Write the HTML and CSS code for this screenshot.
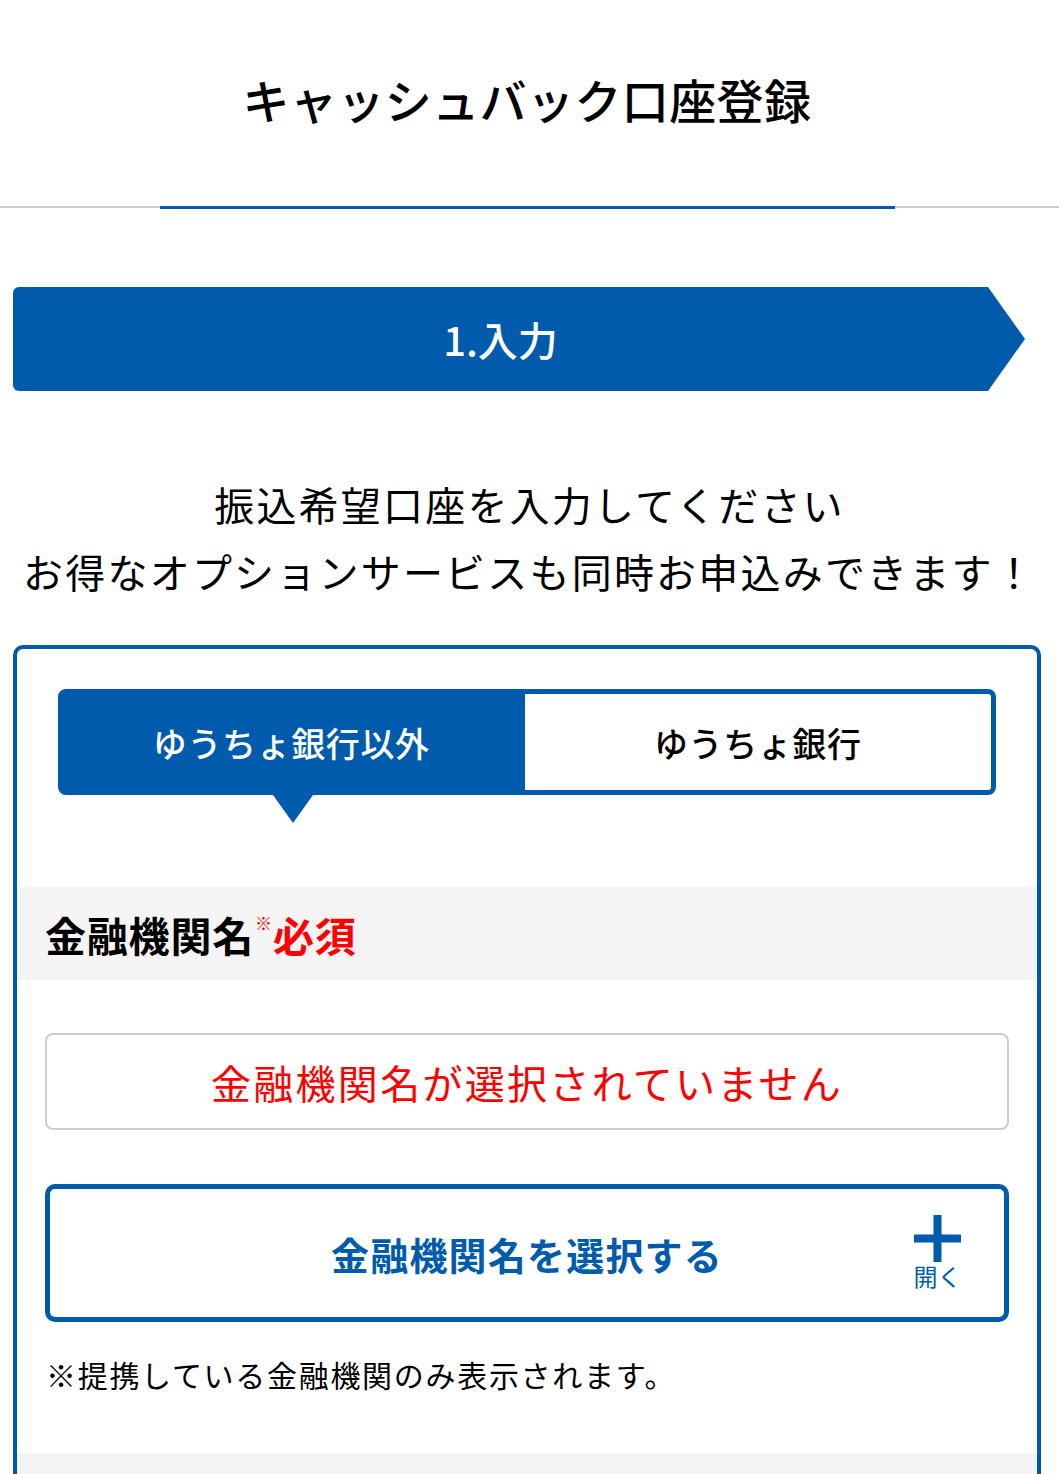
FILE: index.html
```html
<!DOCTYPE html>
<html lang="ja">
<head>
<meta charset="utf-8">
<title>キャッシュバック口座登録</title>
<link rel="stylesheet" href="styles.css">
</head>
<body>
<header class="page-header">
  <h1 class="page-title">キャッシュバック口座登録</h1>
</header>
<div class="rule">
  <span class="rule-gray"></span><span class="rule-active"></span><span class="rule-gray"></span>
</div>
<div class="step">
  <div class="step-body">1.入力</div>
  <svg class="step-arrow" viewBox="0 0 37 104" width="37" height="104" aria-hidden="true"><polygon points="0,0 37,52 0,104" fill="#005bac"/></svg>
</div>
<p class="intro">振込希望口座を入力してください<br>お得なオプションサービスも同時お申込みできます！</p>
<section class="card">
  <div class="tabs">
    <div class="tab tab-active">ゆうちょ銀行以外<span class="tab-pointer"></span></div>
    <div class="tab tab-idle">ゆうちょ銀行</div>
  </div>
  <div class="field-head">
    <span class="field-label">金融機関名</span><span class="req-mark">※</span><span class="req">必須</span>
  </div>
  <div class="field-value">金融機関名が選択されていません</div>
  <button class="select-btn" type="button">
    <span class="select-text">金融機関名を選択する</span>
    <span class="open-toggle">
      <svg class="plus" viewBox="0 0 47 47" width="47" height="47" aria-hidden="true"><rect x="19.5" y="0" width="8" height="47" fill="#005bac"/><rect x="0" y="19.5" width="47" height="8" fill="#005bac"/></svg>
      <span class="open-label">開く</span>
    </span>
  </button>
  <p class="note">※提携している金融機関のみ表示されます。</p>
  <div class="field-head field-next"></div>
</section>
</body>
</html>
```
FILE: styles.css
```css
html, body {
  margin: 0;
  padding: 0;
  background: #fff;
}
body {
  font-family: "Noto Sans CJK JP", "Noto Sans", sans-serif;
  color: #000;
  width: 1059px;
  overflow: hidden;
}
.page-header {
  height: 206px;
  display: flex;
  align-items: center;
  justify-content: center;
  padding-bottom: 10px;
  padding-right: 5px;
  box-sizing: border-box;
}
.page-title {
  margin: 0;
  font-size: 47px;
  line-height: 1;
  font-weight: 500;
  letter-spacing: 0.4px;
}
.rule {
  display: flex;
  height: 3px;
}
.rule-gray {
  flex: 1;
  height: 2px;
  background: #cccccc;
}
.rule-active {
  width: 735px;
  height: 3px;
  background: #005bac;
}
.rule .rule-gray:first-child {
  flex: 0 0 160px;
}
.step {
  display: flex;
  margin: 78px 34px 0 13px;
  height: 104px;
}
.step-body {
  flex: 1;
  background: #005bac;
  border-radius: 6px 0 0 6px;
  color: #fff;
  font-size: 40px;
  font-weight: 500;
  display: flex;
  align-items: center;
  justify-content: center;
}
.step-arrow {
  display: block;
  flex: 0 0 37px;
}
.intro {
  margin: 80px 0 0;
  text-align: center;
  font-size: 40px;
  line-height: 67px;
  letter-spacing: 2.2px;
  font-weight: 400;
}
.card {
  margin: 40px 18px 0 13px;
  border: 4px solid #005bac;
  border-bottom: none;
  border-radius: 10px 10px 0 0;
  padding-top: 40px;
}
.tabs {
  display: flex;
  margin: 0 41px;
  height: 106px;
}
.tab {
  flex: 1;
  display: flex;
  align-items: center;
  justify-content: center;
  font-size: 34px;
  font-weight: 500;
  letter-spacing: 0.6px;
  box-sizing: border-box;
}
.tab-active {
  position: relative;
  background: #005bac;
  color: #fff;
  border-radius: 8px 0 0 8px;
}
.tab-pointer {
  position: absolute;
  left: 50%;
  top: 100%;
  margin-left: -18px;
  width: 0;
  height: 0;
  border-left: 20px solid transparent;
  border-right: 20px solid transparent;
  border-top: 28px solid #005bac;
}
.tab-idle {
  background: #fff;
  color: #000;
  border: 5px solid #005bac;
  border-left: none;
  border-radius: 0 8px 8px 0;
}
.field-head {
  margin-top: 92px;
  height: 93px;
  background: #f4f4f4;
  display: flex;
  align-items: center;
  padding-left: 28px;
}
.field-label {
  font-size: 41px;
  font-weight: 700;
  letter-spacing: 0.8px;
  color: #000;
}
.req-mark {
  align-self: flex-start;
  margin-top: 27px;
  font-size: 17px;
  line-height: 1;
  color: #ff0000;
  margin-left: 1px;
  margin-right: 1px;
}
.req {
  font-size: 41px;
  font-weight: 700;
  letter-spacing: 0.8px;
  color: #ff0000;
}
.field-value {
  margin: 53px 28px 0;
  height: 97px;
  box-sizing: border-box;
  border: 2px solid #cccccc;
  border-radius: 8px;
  display: flex;
  align-items: center;
  justify-content: center;
  color: #ff0000;
  font-size: 40px;
  letter-spacing: 2.3px;
  font-weight: 400;
}
.select-btn {
  position: relative;
  display: flex;
  align-items: center;
  justify-content: center;
  width: calc(100% - 56px);
  margin: 54px 28px 0;
  height: 138px;
  box-sizing: border-box;
  border: 5px solid #005bac;
  border-radius: 10px;
  background: #fff;
  font-family: inherit;
  padding: 0;
  cursor: pointer;
}
.select-text {
  font-size: 38px;
  font-weight: 700;
  color: #005bac;
  letter-spacing: 1.2px;
}
.open-toggle {
  position: absolute;
  right: 43px;
  top: 26px;
  width: 47px;
  display: flex;
  flex-direction: column;
  align-items: center;
}
.plus {
  display: block;
}
.open-label {
  font-size: 24px;
  line-height: 28px;
  color: #005bac;
  white-space: nowrap;
}
.note {
  margin: 30px 0 0 29px;
  font-size: 30px;
  line-height: 44px;
  letter-spacing: 1.7px;
  font-weight: 400;
}
.field-next {
  margin-top: 57px;
  height: 60px;
}
```
